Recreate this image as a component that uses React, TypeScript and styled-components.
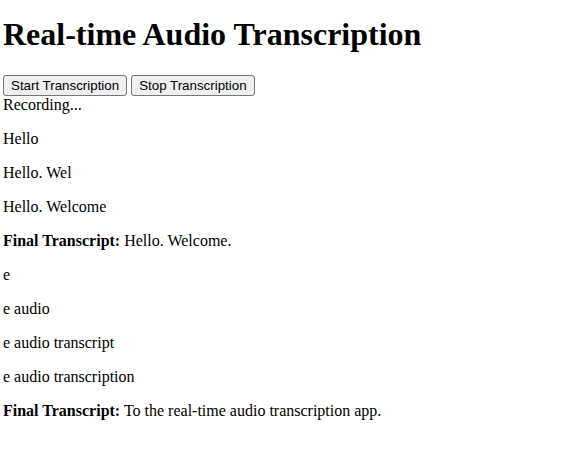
import React from "react";
import styled, { createGlobalStyle } from "styled-components";

const Global = createGlobalStyle`
  html, body { margin: 0; padding: 0; background: #ffffff; }
  body { font-family: "Liberation Serif", "Times New Roman", serif; font-size: 16px; color: #000; }
`;

const Page = styled.div`
  padding: 0 3px;
  display: flow-root;
`;

const Title = styled.h1`
  font-size: 32px;
  font-weight: bold;
  margin: 16px 0 22px;
  line-height: normal;
`;

const Controls = styled.div`
  display: flex;
  gap: 4px;
`;

const Button = styled.button`
  font-family: "Liberation Sans", Arial, sans-serif;
  font-size: 13.33px;
  line-height: normal;
  height: 21px;
  padding: 0 7px;
  background: #efefef;
  color: #000;
  border: 1px solid #767676;
  border-radius: 3px;
`;

const Status = styled.div`
  line-height: normal;
`;

const Line = styled.p`
  margin: 16px 0;
  line-height: normal;
`;

const partials1 = ["Hello", "Hello. Wel", "Hello. Welcome"];
const partials2 = ["e", "e audio", "e audio transcript", "e audio transcription"];

export default function App() {
  return (
    <>
      <Global />
      <Page>
        <Title>Real-time Audio Transcription</Title>
        <Controls>
          <Button>Start Transcription</Button>
          <Button>Stop Transcription</Button>
        </Controls>
        <Status>Recording...</Status>
        {partials1.map((t) => (
          <Line key={t}>{t}</Line>
        ))}
        <Line>
          <strong>Final Transcript:</strong> Hello. Welcome.
        </Line>
        {partials2.map((t) => (
          <Line key={t}>{t}</Line>
        ))}
        <Line>
          <strong>Final Transcript:</strong> To the real-time audio transcription app.
        </Line>
      </Page>
    </>
  );
}
